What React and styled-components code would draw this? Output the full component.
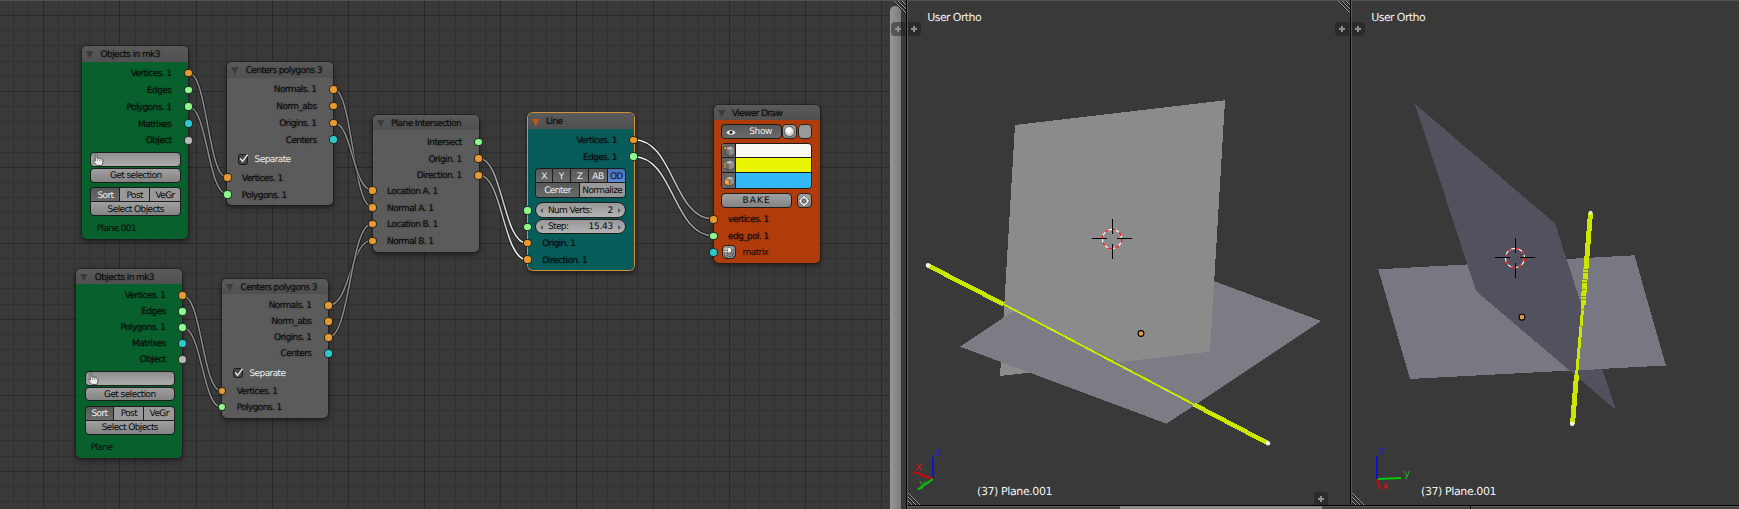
import React from "react";
import styled, { createGlobalStyle, css } from "styled-components";

const GlobalStyle = createGlobalStyle`
  * { box-sizing: border-box; }
  body {
    margin: 0;
    background: #393939;
    overflow: hidden;
    font-family: "DejaVu Sans", sans-serif;
    text-rendering: geometricPrecision;
  }
`;

const C = { orange: "#e79a32", green: "#8ffb8f", cyan: "#2fc9cb", gray: "#b4bab8" };

/* ---------- window layout ---------- */
const Window = styled.div`
  display: flex;
  width: 1739px;
  height: 509px;
  background: #393939;
`;

const NodeEditor = styled.section`
  position: relative;
  display: flex;
  justify-content: flex-end;
  flex: none;
  width: 906px;
  height: 509px;
  border-top: 1px solid #525252;
  overflow: hidden;
`;

const Backdrop = styled.svg`
  position: absolute;
  left: 0;
  top: -1px;
  width: 890px;
  height: 509px;
`;

const ScrollTrack = styled.div`
  position: relative;
  width: 16px;
  padding-top: 5px;
  background: #393939;
`;

const ScrollThumb = styled.div`
  width: 11px;
  height: 520px;
  border-radius: 5px 5px 0 0;
  background: linear-gradient(to right, #979797, #7c7c7c);
`;

const Splitter = styled.div`
  flex: none;
  width: 2px;
  height: 100%;
  background: linear-gradient(to right, #000 50%, #585858 50%);
`;

const Views = styled.div`
  display: flex;
  flex-direction: column;
  flex: none;
  width: 831px;
`;

const ViewRow = styled.div`
  display: flex;
  height: 505px;
`;

const Viewport = styled.section`
  position: relative;
  flex: none;
  width: ${(p) => p.$w}px;
  height: 505px;
  border-top: 1px solid #525252;
  overflow: hidden;
`;

const Scene = styled.svg`
  position: absolute;
  left: 0;
  top: -1px;
  width: 100%;
  height: 505px;
`;

const BottomStrip = styled.div`
  display: flex;
  height: 4px;
  border-top: 1px solid #000;
  background: linear-gradient(#5a5a5a 1px, #474747 1px);
`;

const StripSpace = styled.div`
  width: ${(p) => p.$w}px;
`;

const StripThumb = styled.div`
  width: 202px;
  background: #8b8b8b;
`;

const StripEdge = styled.div`
  width: 1px;
  background: #000;
`;

const ViewLabel = styled.div`
  position: absolute;
  left: ${(p) => p.$x}px;
  top: ${(p) => p.$y}px;
  color: #f2f2f2;
  font-size: 11px;
  line-height: 14px;
  letter-spacing: ${(p) => p.$track}px;
  white-space: nowrap;
`;

const Tab = styled.div`
  position: absolute;
  left: ${(p) => p.$x}px;
  top: ${(p) => p.$y}px;
  display: flex;
  align-items: center;
  justify-content: center;
  width: 14px;
  height: 14px;
  background: rgba(30, 30, 30, 0.5);
  border-radius: ${(p) =>
    p.$side === "left" ? "4px 0 0 4px" : p.$side === "top" ? "4px 4px 0 0" : "0 4px 4px 0"};
`;

function PlusTab({ x, y, side }) {
  return (
    <Tab $x={x} $y={y} $side={side}>
      <svg width="6" height="6" shapeRendering="crispEdges">
        <path d="M2 0h2v6h-2zM0 2h6v2h-6z" fill="#8f8f8f" />
      </svg>
    </Tab>
  );
}

/* ---------- nodes ---------- */
const NodeBox = styled.article`
  position: absolute;
  left: ${(p) => p.$x}px;
  top: ${(p) => p.$y - 1}px;
  width: 106.2px;
  height: ${(p) => p.$h}px;
  border-radius: 5px;
  background: ${(p) => p.$bg};
  box-shadow: ${(p) =>
    p.$active
      ? "0 0 0 1px #d0913a, 0 2px 5px 1px rgba(0,0,0,.5)"
      : "0 0 0 0.8px rgba(22,22,22,.5), 0 2px 5px 1px rgba(0,0,0,.42)"};
  color: #080808;
  font-size: 9px;
  letter-spacing: -0.6px;
  white-space: nowrap;
`;

const NodeHeader = styled.header`
  display: flex;
  align-items: center;
  height: 15.5px;
  padding: 2.5px 0 0 4px;
  gap: 7px;
  border-radius: 5px 5px 0 0;
  background: linear-gradient(#5a5a5a, #505050);
  text-shadow: 0 0 2px rgba(0, 0, 0, 0.35);
`;

const Rows = styled.div`
  padding-top: ${(p) => p.$top}px;
`;

const Row = styled.div`
  position: relative;
  display: flex;
  align-items: center;
  justify-content: ${(p) => (p.$out ? "flex-end" : "flex-start")};
  height: ${(p) => p.$h}px;
  padding: 2.4px 17px 0 14.5px;
  text-shadow: 0 0 2px rgba(0, 0, 0, 0.4);
`;

const Socket = styled.i`
  position: absolute;
  top: 50%;
  ${(p) => (p.$out ? "right: -4.2px;" : "left: -4.4px;")}
  width: 8.6px;
  height: 8.6px;
  margin-top: -4.2px;
  border: 0.8px solid rgba(20, 20, 20, 0.85);
  border-radius: 50%;
  background: ${(p) => p.$c};
`;

function Rail({ items, out, h, top }) {
  return (
    <Rows $top={top}>
      {items.map(([label, color]) => (
        <Row key={label} $out={out} $h={h}>
          {label}
          <Socket $c={color} $out={out} />
        </Row>
      ))}
    </Rows>
  );
}

function Title({ children, active }) {
  return (
    <NodeHeader>
      <svg width="7.4" height="7.4" viewBox="0 0 7 7">
        <path d="M0 0h7L3.5 7z" fill={active ? "#c45618" : "#3b3b3b"} />
      </svg>
      {children}
    </NodeHeader>
  );
}

const raised = css`
  background: linear-gradient(#a0a0a0, #848484);
  border: 1px solid #1c1c1c;
`;

const Controls = styled.div`
  display: flex;
  flex-direction: column;
  width: 90.5px;
  margin: ${(p) => p.$top}px 0 0 ${(p) => p.$left || 8.3}px;
`;

const Field = styled.div`
  display: flex;
  align-items: center;
  height: 15px;
  padding-left: 1px;
  border: 1px solid #1c1c1c;
  border-radius: 4px;
  background: linear-gradient(#8f8f8f, #acacac);
`;

const Button = styled.div`
  ${raised}
  display: flex;
  align-items: center;
  justify-content: center;
  height: ${(p) => p.$h || 14.3}px;
  margin-top: ${(p) => p.$mt || 0}px;
  width: ${(p) => (p.$w ? p.$w + "px" : "auto")};
  border-radius: ${(p) => p.$r || "4px"};
  letter-spacing: ${(p) => p.$track ?? -0.6}px;
  padding-top: 1.6px;
`;

const Segments = styled.div`
  display: flex;
  height: ${(p) => p.$h}px;
  margin-top: ${(p) => p.$mt || 0}px;
  border: 1px solid #1c1c1c;
  border-radius: ${(p) => p.$r};
  border-bottom-width: ${(p) => (p.$openBottom ? 0 : 1)}px;
  overflow: hidden;
`;

const Segment = styled.div`
  display: flex;
  align-items: center;
  justify-content: center;
  flex: ${(p) => p.$w} 0 0;
  min-width: 0;
  padding-top: 1.6px;
  border-left: ${(p) => (p.$first ? 0 : 1)}px solid #1c1c1c;
  ${(p) =>
    p.$tone === "blue"
      ? "background: linear-gradient(#4a6fb8, #5f8bd8); color: #0a0a0a;"
      : p.$tone === "dark"
      ? "background: linear-gradient(#585858, #6a6a6a); color: #efefef;"
      : "background: #999; color: #0a0a0a;"}
`;

function Segmented({ items, ...rest }) {
  return (
    <Segments {...rest}>
      {items.map(([label, w, tone], i) => (
        <Segment key={label} $w={w} $tone={tone} $first={i === 0}>
          {label}
        </Segment>
      ))}
    </Segments>
  );
}

const NodeNote = styled.div`
  margin: ${(p) => p.$mt}px 0 0 14.5px;
  line-height: 12px;
`;

const CheckRow = styled.div`
  display: flex;
  align-items: center;
  gap: 6.2px;
  height: 14px;
  margin: ${(p) => p.$mt}px 0 0 10.5px;
  color: #ededed;
`;

const CheckLabel = styled.span`
  padding-top: 1.2px;
`;

const CheckBox = styled.div`
  width: 10.6px;
  height: 10.6px;
  border: 1px solid #1a1a1a;
  border-radius: 2.5px;
  background: #464646;
`;

const CheckMark = styled.svg`
  display: block;
  overflow: visible;
`;

const NumberField = styled.div`
  display: flex;
  align-items: center;
  height: 15.2px;
  margin-top: ${(p) => p.$mt}px;
  padding: 1.8px 4px 0;
  border: 1px solid #1c1c1c;
  border-radius: 8px;
  background: linear-gradient(#989898, #b4b4b4);
`;

const NumberName = styled.span`
  flex: 1;
  margin-left: 4.5px;
`;

const NumberValue = styled.span`
  margin-right: 5px;
  letter-spacing: -0.3px;
`;

function Num({ name, value, mt }) {
  return (
    <NumberField $mt={mt}>
      <svg width="3" height="5"><path d="M3 0v5L0 2.5z" fill="#5d5d5d" /></svg>
      <NumberName>{name}</NumberName>
      <NumberValue>{value}</NumberValue>
      <svg width="3" height="5"><path d="M0 0v5L3 2.5z" fill="#5d5d5d" /></svg>
    </NumberField>
  );
}

function Hand() {
  return (
    <svg width="12" height="13" viewBox="0 0 11 12">
      <path
        d="M3 1.2c0-1 1.5-1 1.5 0v3.6l1-.3 1 .4 1-.2.8.6 1 0 .8.9v2.3L9 11.5H4.4L1 7.6c-.5-.9.6-1.4 1.3-.7L3 7.6z"
        fill="#ececec" stroke="#4a4a4a" strokeWidth=".8"
      />
      <path d="M5 5.5v2M6.7 5.5v2M8.3 6v1.5" stroke="#777" strokeWidth=".6" />
    </svg>
  );
}

function ObjectsNode({ x, y, h, pitch, gap, name }) {
  return (
    <NodeBox $x={x} $y={y} $h={h} $bg="rgba(6,98,44,.97)">
      <Title>Objects in mk3</Title>
      <Rail
        out h={pitch} top={3}
        items={[["Vertices. 1", C.orange], ["Edges", C.green], ["Polygons. 1", C.green], ["Matrixes", C.cyan], ["Object", C.gray]]}
      />
      <Controls $top={gap}>
        <Field><Hand /></Field>
        <Button $mt={1.2}>Get selection</Button>
        <Segmented
          $mt={4.5} $h={14.4} $r="4px 4px 0 0" $openBottom
          items={[["Sort", 29, "dark"], ["Post", 30], ["VeGr", 31]]}
        />
        <Button $h={15} $r="0 0 4px 4px">Select Objects</Button>
      </Controls>
      <NodeNote $mt={6.8}>{name}</NodeNote>
    </NodeBox>
  );
}

function CentersNode({ x, y, h, pitch, gap, inTop }) {
  return (
    <NodeBox $x={x} $y={y} $h={h} $bg="rgba(93,93,93,.95)">
      <Title>Centers polygons 3</Title>
      <Rail
        out h={pitch} top={3}
        items={[["Normals. 1", C.orange], ["Norm_abs", C.orange], ["Origins. 1", C.orange], ["Centers", C.cyan]]}
      />
      <CheckRow $mt={gap}>
        <CheckBox>
          <CheckMark width="10" height="9" viewBox="0 0 10 9">
            <path d="M1.2 3.4l2.4 2.8L8.6 -.4" fill="none" stroke="#e0e0e0" strokeWidth="1.5" />
          </CheckMark>
        </CheckBox>
        <CheckLabel>Separate</CheckLabel>
      </CheckRow>
      <Rail h={pitch} top={inTop} items={[["Vertices. 1", C.orange], ["Polygons. 1", C.green]]} />
    </NodeBox>
  );
}

/* viewer node parts */
const ViewerLine = styled.div`
  display: flex;
  gap: ${(p) => p.$gap}px;
  margin-top: ${(p) => p.$mt || 0}px;
`;

const ShowButton = styled.div`
  display: flex;
  align-items: center;
  gap: 13px;
  width: 61px;
  height: 14.6px;
  padding: 1px 0 0 4px;
  border: 1px solid #1c1c1c;
  border-radius: 4px;
  background: linear-gradient(#585858, #6a6a6a);
  color: #f0f0f0;
  letter-spacing: -0.4px;
`;

const Square = styled.div`
  display: flex;
  align-items: center;
  justify-content: center;
  width: 14.4px;
  height: ${(p) => p.$h || 14.6}px;
  border: 1px solid #2a2018;
  border-radius: 4px;
  background: ${(p) => (p.$flat ? "#999" : "linear-gradient(#a0a0a0, #848484)")};
`;

const Swatches = styled.div`
  margin-top: 4.3px;
  border: 1px solid #1c1c1c;
  border-radius: 4px;
  overflow: hidden;
`;

const Swatch = styled.div`
  display: flex;
  height: ${(p) => p.$h}px;
  border-bottom: ${(p) => (p.$last ? 0 : 1)}px solid #1c1c1c;
  background: ${(p) => p.$c};
`;

const SwatchIcon = styled.div`
  display: flex;
  align-items: center;
  justify-content: center;
  width: 14px;
  border-right: 1px solid #1c1c1c;
  background: #646464;
`;

const MatrixRow = styled.div`
  position: relative;
  display: flex;
  align-items: center;
  gap: 6.5px;
  height: 15px;
  margin-top: 0.4px;
  padding-left: 8.2px;
`;

function Cube({ mode }) {
  return (
    <svg width="12" height="12" viewBox="0 0 12 12">
      <path d="M2 3.6L7 1.6l4 1.4v5.6L6.4 11 2 9.2z" fill="#6d6d6d" stroke="#2d2d2d" strokeWidth=".6" />
      <path d="M2 3.6L7 1.6l4 1.4-4.6 2z" fill="#b9b9b9" />
      <path d="M6.4 5L11 3v5.6L6.4 11z" fill="#8f8f8f" />
      {mode === "face" && <path d="M1.6 3.5l4.8 1.7V11L1.6 9z" fill="#f3a552" stroke="#5b3010" strokeWidth=".6" />}
      {mode === "edge" && <path d="M1.1 3.2h1.8v6.3H1.1z" fill="#f0a050" stroke="#5b3010" strokeWidth=".5" />}
      {mode === "vert" && <rect x="1" y="1.8" width="2.6" height="2.6" fill="#f0a050" stroke="#5b3010" strokeWidth=".5" />}
    </svg>
  );
}

function ViewerNode() {
  return (
    <NodeBox $x={713.5} $y={104.8} $h={158} $bg="rgba(181,60,9,.97)">
      <Title>Viewer Draw</Title>
      <Controls $top={4} $left={7.8}>
        <ViewerLine $gap={0.9}>
          <ShowButton>
            <svg width="10" height="7" viewBox="0 0 10 7">
              <path d="M.4 3.6C2.5.6 7.5.6 9.6 3.6 7.5 6.6 2.5 6.6.4 3.6z" fill="#f4f4f4" />
              <circle cx="5" cy="3.3" r="1.5" fill="#222" />
            </svg>
            Show
          </ShowButton>
          <Square>
            <svg width="11" height="11" viewBox="0 0 11 11">
              <circle cx="5.5" cy="5.5" r="4.9" fill="#d9d9d9" stroke="#333" strokeWidth=".7" />
              <circle cx="4.6" cy="4.3" r="3" fill="#fff" />
            </svg>
          </Square>
          <Square $flat />
        </ViewerLine>
        <Swatches>
          <Swatch $h={14.2} $c="#f9faf4"><SwatchIcon><Cube mode="vert" /></SwatchIcon></Swatch>
          <Swatch $h={15} $c="#e8f400"><SwatchIcon><Cube mode="edge" /></SwatchIcon></Swatch>
          <Swatch $h={14.4} $c="#33b8f5" $last><SwatchIcon><Cube mode="face" /></SwatchIcon></Swatch>
        </Swatches>
        <ViewerLine $gap={5.3} $mt={4.2}>
          <Button $w={70.6} $h={15.2} $track={1.1}>BAKE</Button>
          <Square $h={15.2}>
            <svg width="12" height="12" viewBox="0 0 12 12" fill="none">
              <path d="M6 .3L11.700 6 6 11.700 .3 6z" stroke="#444" strokeWidth=".7" fill="#a8a8a8" />
              <circle cx="6" cy="6" r="3.500" stroke="#f0f0f0" strokeWidth="1.100" />
              <circle cx="6" cy="6" r="1.800" fill="#8a8a8a" stroke="#333" strokeWidth=".6" />
              <path d="M6 .8v2.400M6 8.800v2.400M.8 6h2.400M8.800 6h2.400" stroke="#f4f4f4" strokeWidth="1.200" />
            </svg>
          </Square>
        </ViewerLine>
      </Controls>
      <Rail h={16.7} top={2.7} items={[["vertices. 1", C.orange], ["edg_pol. 1", C.green]]} />
      <MatrixRow>
        <Socket $c={C.cyan} />
        <Square>
          <svg width="13" height="13" viewBox="0 0 12 12">
            <path d="M2 6.500c0 5.500 9 5.500 9 .5" fill="none" stroke="#333" strokeWidth="2.200" />
            <path d="M3 7.500h4c3 0 3-3 2.500-4.500" fill="none" stroke="#333" strokeWidth="2" />
            <path d="M2 6.500c0 5.500 9 5.500 9 .5M3 7.500h4c3 0 3-3 2.500-4.500" fill="none" stroke="#ddd" strokeWidth=".9" />
            <path d="M4.500 1h1.500c3 0 3 5.500 0 5.500H4.500z" fill="#f8f8f8" stroke="#333" strokeWidth=".6" />
            <path d="M1.500 2.500h3M1.500 5h3" stroke="#e6e09a" strokeWidth="1.100" />
          </svg>
        </Square>
        <CheckLabel>matrix</CheckLabel>
      </MatrixRow>
    </NodeBox>
  );
}

/* ---------- grid and links ---------- */
const GRID = Array.from({ length: 62 }, (_, i) => i - 3);
const LINKS = [
  [188.3, 72.8, 227, 177.3, "d", "d"],
  [188.3, 106.5, 227, 194, "d", "d"],
  [333.3, 88.7, 372, 206.8, "d", "d"],
  [333.3, 122.5, 372, 190, "d", "d"],
  [182.5, 295.5, 221.8, 391.3, "d", "d"],
  [182.5, 327.5, 221.8, 407.3, "d", "d"],
  [328.3, 305.7, 372, 240.3, "d", "d"],
  [328.3, 337.5, 372, 223.7, "d", "d"],
  [478.8, 158.3, 527, 243.3, "d", "l"],
  [478.8, 175, 527, 259.7, "d", "l"],
  [634, 139.7, 713, 219, "l", "d"],
  [634, 156.7, 713, 235.7, "l", "d"],
];
const TONE = { d: "#888", l: "#fafafa" };

function Graph() {
  return (
    <Backdrop viewBox="0 0 890 509">
      <g shapeRendering="crispEdges">
        {GRID.map((i) => {
          const major = i % 5 === 0;
          const x = Math.round(43.2 + i * 15.235);
          const y = Math.round(15 + i * 15.19);
          const fill = major ? "#292929" : "#313131";
          return (
            <g key={i} fill={fill}>
              <rect x={x} y="0" width="1" height="509" />
              <rect x="0" y={y} width="890" height="1" />
            </g>
          );
        })}
      </g>
      {LINKS.map(([x1, y1, x2, y2, a, b], i) => {
        const k = (x2 - x1) / 2;
        const d = `M${x1} ${y1}C${x1 + k} ${y1} ${x2 - k} ${y2} ${x2} ${y2}`;
        return (
          <g key={i} fill="none">
            <linearGradient id={`ln${i}`} gradientUnits="userSpaceOnUse" x1={x1} y1={y1} x2={x2} y2={y2}>
              <stop offset="0" stopColor={TONE[a]} />
              <stop offset="1" stopColor={TONE[b]} />
            </linearGradient>
            <path d={d} stroke="rgba(15,15,15,.75)" strokeWidth="3.2" />
            <path d={d} stroke={`url(#ln${i})`} strokeWidth="1.6" />
          </g>
        );
      })}
    </Backdrop>
  );
}

/* ---------- 3D scene parts ---------- */
function Cursor3D({ cx, cy }) {
  const step = (2 * Math.PI * 9.6) / 16;
  return (
    <g fill="none">
      <circle cx={cx - 0.5} cy={cy + 0.5} r="9.6" stroke="#fff" strokeWidth="1.1" />
      <circle cx={cx - 0.5} cy={cy + 0.5} r="9.6" stroke="#f00" strokeWidth="1.2" strokeDasharray={`${step} ${step}`} />
      <path
        d={`M${cx} ${cy - 19.5}v15M${cx} ${cy + 5.5}v15M${cx - 20.5} ${cy}h15M${cx + 4.5} ${cy}h15`}
        stroke="#000" strokeWidth="1" shapeRendering="crispEdges"
      />
    </g>
  );
}

function Origin({ cx, cy }) {
  return <circle cx={cx} cy={cy} r="2.9" fill="#dc9a4c" stroke="#000" strokeWidth="1.1" />;
}

function Corner({ d }) {
  return (
    <g shapeRendering="crispEdges" fill="none">
      <path d={d} stroke="#111" strokeWidth="1" transform="translate(0 1)" />
      <path d={d} stroke="#a0a0a0" strokeWidth="1" />
    </g>
  );
}

const AxisText = styled.text`
  font-size: 11px;
  text-anchor: middle;
`;

const EdgeSockets = styled.div`
  position: absolute;
  left: -4.4px;
  top: 93px;
  display: flex;
  flex-direction: column;
  gap: 8px;
`;

const Pin = styled.i`
  width: 8.6px;
  height: 8.6px;
  border: 0.8px solid rgba(20, 20, 20, 0.85);
  border-radius: 50%;
  background: ${(p) => p.$c};
`;

const CornerMark = styled.svg`
  position: absolute;
  right: 0;
  top: 0;
  width: 12px;
  height: 12px;
`;

function App() {
  return (
    <>
      <GlobalStyle />
      <Window>
        <NodeEditor>
          <Graph />
          <ObjectsNode x={82.2} y={46.2} h={192.6} pitch={16.8} gap={3.4} name="Plane.001" />
          <CentersNode x={227.3} y={62.2} h={142.6} pitch={16.85} gap={4.2} inTop={3} />
          <ObjectsNode x={76.3} y={268.8} h={188.8} pitch={16} gap={3.5} name="Plane" />
          <CentersNode x={222.2} y={278.8} h={139.6} pitch={16} gap={4.7} inTop={3} />
          <NodeBox $x={372.5} $y={114.8} $h={137} $bg="rgba(93,93,93,.95)">
            <Title>Plane Intersection</Title>
            <Rail out h={16.8} top={3} items={[["Intersect", C.green], ["Origin. 1", C.orange], ["Direction. 1", C.orange]]} />
            <PlaneInputs>
              <Rail
                h={16.7} top={0}
                items={[["Location A. 1", C.orange], ["Normal A. 1", C.orange], ["Location B. 1", C.orange], ["Normal B. 1", C.orange]]}
              />
            </PlaneInputs>
          </NodeBox>
          <NodeBox $x={527.7} $y={113.3} $h={156.8} $bg="rgba(6,94,92,.97)" $active>
            <Title active>Line</Title>
            <Rail out h={16.7} top={2.8} items={[["Vertices. 1", C.orange], ["Edges. 1", C.green]]} />
            <Controls $top={3.3} $left={7.7}>
              <Segmented
                $h={14} $r="4px 4px 0 0" $openBottom
                items={[["X", 16, "dark"], ["Y", 18.3, "dark"], ["Z", 18, "dark"], ["AB", 18.6, "dark"], ["OD", 18, "blue"]]}
              />
              <Segmented $h={15.3} $r="0 0 4px 4px" items={[["Center", 43.5, "dark"], ["Normalize", 46.5]]} />
              <Num name="Num Verts:" value="2" mt={4.8} />
              <Num name="Step:" value="15.43" mt={1.4} />
            </Controls>
            <Rail h={16.5} top={0.6} items={[["Origin. 1", C.orange], ["Direction. 1", C.orange]]} />
            <EdgeSockets>
              <Pin $c={C.green} />
              <Pin $c={C.green} />
            </EdgeSockets>
          </NodeBox>
          <ViewerNode />
          <ScrollTrack><ScrollThumb /></ScrollTrack>
          <CornerMark viewBox="0 0 12 12"><Corner d="M0 0l12 12M4 0l8 8M8 0l4 4" /></CornerMark>
          <PlusTab x={891} y={21} side="left" />
        </NodeEditor>
        <Splitter />
        <Views>
          <ViewRow>
            <Viewport $w={442}>
              <Scene viewBox="908 0 442 505">
                <g shapeRendering="crispEdges">
                  <path d="M960 346.700L1114.300 244L1321 321L1166.700 423.700z" fill="#7c7c85" />
                  <path d="M1015 125L1225 100.300L1210 351.700L1000 376z" fill="#8b8b8b" />
                  <path d="M960 346.700L1014 310.500L1121 363L1180 395L1166.700 423.700z" fill="#7c7c85" />
                  <path d="M1003 304L1195 405" stroke="#cbe700" strokeWidth="2" />
                  <path d="M928 265.500L1004 304.500M1194 404.500L1267.500 443" stroke="#cbe700" strokeWidth="4.500" />
                </g>
                <circle cx="928" cy="265.300" r="2.200" fill="#f4f4f4" />
                <circle cx="1268" cy="443.300" r="2.200" fill="#f4f4f4" />
                <Cursor3D cx={1112.5} cy={238.5} />
                <Origin cx={1141} cy={333.5} />
                <g strokeWidth="2">
                  <path d="M933 479V457" stroke="#1010d0" />
                  <path d="M933 479L913 471.700" stroke="#cc0808" />
                  <path d="M933 479L918 489.500" stroke="#08c808" />
                </g>
                <AxisText x="938" y="455.500" fill="#2020dc">z</AxisText>
                <AxisText x="918.500" y="469.500" fill="#d81414">x</AxisText>
                <AxisText x="922.500" y="487" fill="#14b014">y</AxisText>
                <Corner d="M908 493l12 12M908 497l8 8M908 501l4 4M1338 1l12 12M1342 1l8 8M1346 1l4 4" />
              </Scene>
              <ViewLabel $x={19.3} $y={9.6} $track={-0.6}>User Ortho</ViewLabel>
              <ViewLabel $x={69} $y={483.5} $track={-0.4}>(37) Plane.001</ViewLabel>
              <PlusTab x={-1} y={21} />
              <PlusTab x={427} y={21} side="left" />
              <PlusTab x={406} y={491} side="top" />
            </Viewport>
            <Splitter />
            <Viewport $w={387}>
              <Scene viewBox="1352 0 387 505">
                <g shapeRendering="crispEdges">
                  <path d="M1378.300 269.300L1634.500 255.300L1665.800 365.500L1410 379z" fill="#787882" />
                  <path d="M1415 104L1555 223.500L1615.500 409.500L1476 291z" fill="#52525f" />
                  <path d="M1581.500 305L1602.500 369L1577 370.500z" fill="#787882" />
                  <path d="M1590.500 213L1583 305M1576.500 375L1572.500 424" stroke="#cbe700" strokeWidth="5" />
                  <path d="M1583 304L1576.500 376" stroke="#cbe700" strokeWidth="3" />
                  <path d="M1583 269.500h6M1583 272.500h6M1582 279.500h5M1582 282.500h5M1581 289.500h5M1580.500 296.500h5M1580.500 299.500h5M1580 309.500h5M1580 326.500h3" stroke="#8a9030" strokeWidth="1" />
                </g>
                <circle cx="1590.500" cy="212.700" r="2" fill="#e8ecc8" />
                <circle cx="1572.200" cy="423.800" r="2.300" fill="#f4f4f4" />
                <Cursor3D cx={1515.5} cy={257.5} />
                <Origin cx={1522} cy={317.2} />
                <g strokeWidth="2">
                  <path d="M1377 479V456" stroke="#1010d0" />
                  <path d="M1377 479L1380.500 489.500" stroke="#cc0808" />
                  <path d="M1378 479L1401 478" stroke="#08c808" />
                </g>
                <AxisText x="1381.700" y="454" fill="#2020dc">z</AxisText>
                <AxisText x="1385.300" y="488.500" fill="#d81414">x</AxisText>
                <AxisText x="1407" y="476.500" fill="#14b014">y</AxisText>
                <Corner d="M1352 493l12 12M1352 497l8 8M1352 501l4 4" />
              </Scene>
              <ViewLabel $x={19.3} $y={9.6} $track={-0.6}>User Ortho</ViewLabel>
              <ViewLabel $x={69} $y={483.5} $track={-0.4}>(37) Plane.001</ViewLabel>
              <PlusTab x={-1} y={21} />
            </Viewport>
          </ViewRow>
          <BottomStrip>
            <StripSpace $w={212} />
            <StripThumb />
            <StripSpace $w={148} />
            <StripEdge />
          </BottomStrip>
        </Views>
      </Window>
    </>
  );
}

const PlaneInputs = styled.div`
  margin-top: -1.4px;
`;

export default App;
